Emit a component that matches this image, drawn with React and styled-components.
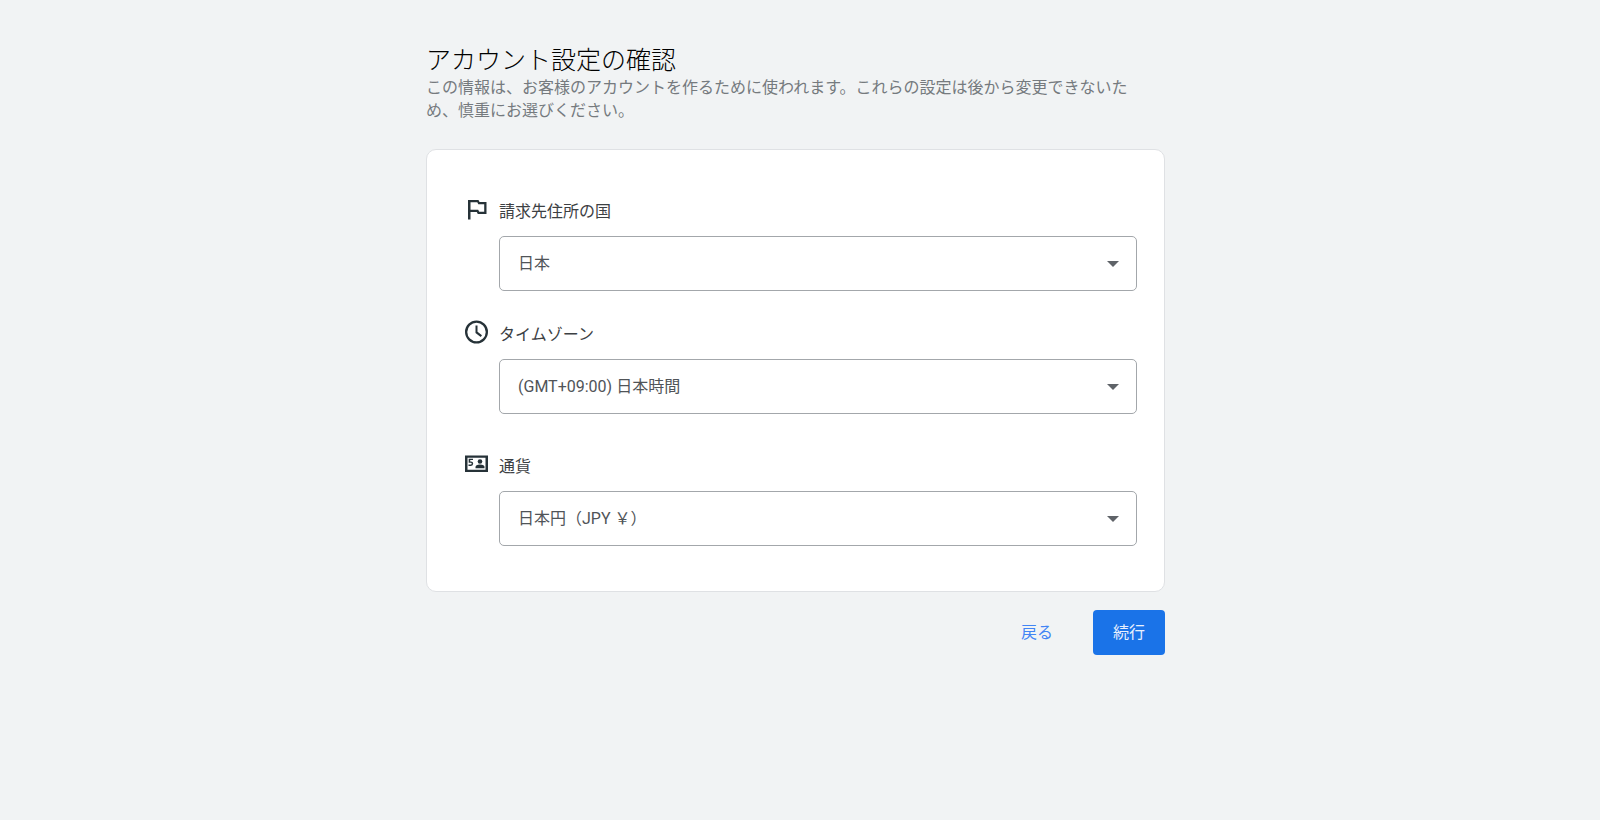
import React, { useId } from "react";
import styled, { createGlobalStyle } from "styled-components";

const GlobalStyle = createGlobalStyle`
  *, *::before, *::after { box-sizing: border-box; }
  body {
    margin: 0;
    background: #f1f3f4;
    color: #3c4043;
    font-family: Roboto, "Noto Sans CJK JP", sans-serif;
    font-size: 16px;
    font-weight: 400;
  }
`;

const Page = styled.main`
  display: flex;
  justify-content: center;
  padding: 44px 18px 44px 9px;
`;

const Content = styled.div`
  flex: 1;
  max-width: 739px;
`;

const Title = styled.h1`
  margin: 0;
  padding-top: 1px;
  font-size: 25px;
  line-height: 31px;
  font-weight: 300;
  color: #000;
`;

const Description = styled.p`
  margin: 0 0 27px;
  padding-right: 24px;
  line-height: 23px;
  color: #757a7e;
`;

const Card = styled.section`
  display: flex;
  flex-direction: column;
  gap: 27px;
  padding: 45px 27px 45px 36px;
  background: #fff;
  border: 1px solid #dfe1e4;
  border-radius: 10px;
`;

const Field = styled.div`
  display: grid;
  grid-template-columns: 28px 1fr;
  column-gap: 8px;
  row-gap: 12px;
  padding-top: ${(p) => (p.$spaced ? "9px" : "0")};
`;

const Icon = styled.svg`
  width: 28px;
  height: 28px;
  display: block;
  fill: #263238;
`;

const Label = styled.label`
  padding-top: 5px;
  line-height: 24px;
`;

const SelectBox = styled.div`
  grid-column: 2;
  display: grid;
  align-items: center;
`;

const Select = styled.select`
  grid-area: 1 / 1;
  appearance: none;
  width: 100%;
  height: 55px;
  margin: 0;
  padding: 0 48px 0 18px;
  background: #fff;
  border: 1px solid #a3a7ab;
  border-radius: 5px;
  color: #505458;
  font: inherit;
`;

const Arrow = styled.svg`
  grid-area: 1 / 1;
  justify-self: end;
  width: 12px;
  height: 6px;
  margin-right: 18px;
  fill: #5f6368;
  pointer-events: none;
`;

const Actions = styled.div`
  display: flex;
  justify-content: flex-end;
  gap: 20px;
  padding-top: 18px;
`;

const Button = styled.button`
  height: 45px;
  padding: 0 20px 3px;
  border: 0;
  border-radius: 4px;
  background: ${(p) => (p.$primary ? "#1a73e8" : "transparent")};
  color: ${(p) => (p.$primary ? "#e8f0fe" : "#4285f4")};
  font: inherit;
  cursor: pointer;
`;

const FlagIcon = () => (
  <Icon viewBox="0 0 28 28" aria-hidden="true">
    <path fillRule="evenodd" d="M5 5h10.500l1 2h7v12h-8.700l-1-2H7.500v7.500H5zM7.500 7.200v7.600h7.700l1 2h5V9.200h-5.900l-1-2z" />
  </Icon>
);

const ClockIcon = () => (
  <Icon viewBox="0 0 28 28" aria-hidden="true">
    <path d="M13.500 2.500a11.500 11.500 0 1 0 0 23 11.500 11.500 0 0 0 0-23zm0 20.700a9.200 9.200 0 1 1 0-18.400 9.200 9.200 0 0 1 0 18.400zM12.500 7.500h2v6.200l4.500 3.500-1.300 1.700-5.200-4z" />
  </Icon>
);

const BanknoteIcon = () => (
  <Icon viewBox="0 0 28 28" aria-hidden="true">
    <path fillRule="evenodd" d="M2 5.500h23v16.500H2zM4.500 7.700v12.100h18V7.700z" />
    <path d="M5.700 8.700H10v1.400H7.200v1.300h.8q2.200 0 2.200 2.200T8 15.900H5.500V14.500h2.300q.9 0 .9-.9t-.9-.9H5.700z" />
    <circle cx="17" cy="11.500" r="2.300" />
    <path d="M12.500 18.200v-1.200q0-2.500 4.500-2.500t4.500 2.500v1.200z" />
  </Icon>
);

function SelectField({ icon, label, value, spaced }) {
  const id = useId();
  return (
    <Field $spaced={spaced}>
      {icon}
      <Label htmlFor={id}>{label}</Label>
      <SelectBox>
        <Select id={id} defaultValue={value}>
          <option>{value}</option>
        </Select>
        <Arrow viewBox="0 0 12 6" aria-hidden="true">
          <path d="M0 0h12L6 6z" />
        </Arrow>
      </SelectBox>
    </Field>
  );
}

export default function App() {
  return (
    <>
      <GlobalStyle />
      <Page lang="ja">
        <Content>
          <Title>アカウント設定の確認</Title>
          <Description>
            この情報は、お客様のアカウントを作るために使われます。これらの設定は後から変更できないため、慎重にお選びください。
          </Description>
          <Card>
            <SelectField icon={<FlagIcon />} label="請求先住所の国" value="日本" />
            <SelectField icon={<ClockIcon />} label="タイムゾーン" value="(GMT+09:00) 日本時間" />
            <SelectField icon={<BanknoteIcon />} label="通貨" value="日本円（JPY ￥）" spaced />
          </Card>
          <Actions>
            <Button type="button">戻る</Button>
            <Button type="button" $primary>続行</Button>
          </Actions>
        </Content>
      </Page>
    </>
  );
}
